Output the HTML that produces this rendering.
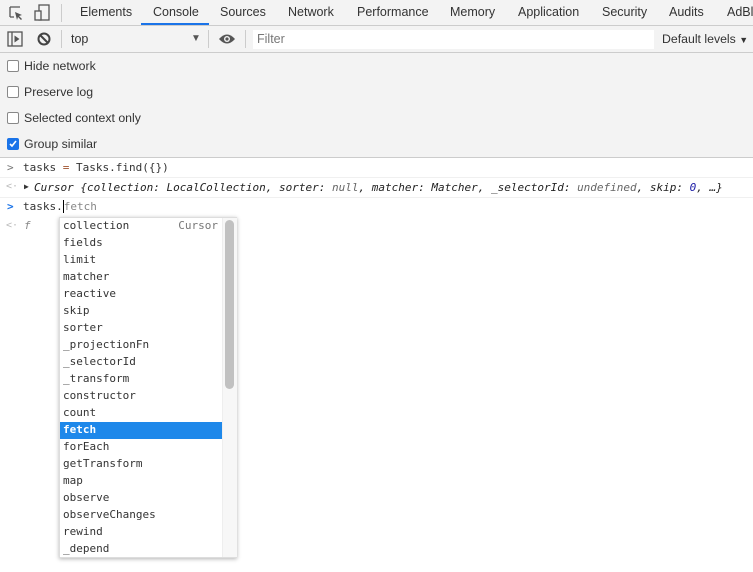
<!DOCTYPE html>
<html><head><style>
*{margin:0;padding:0;box-sizing:border-box}
body{width:753px;height:572px;background:#fff;font-family:"Liberation Sans",Arial,sans-serif;font-size:12px;color:#333;position:relative;overflow:hidden}
.abs{position:absolute}
.tabs{left:0;top:0;width:753px;height:26px;background:#f3f3f3;border-bottom:1px solid #ccc}
.tab{position:absolute;top:5px;font-size:12.5px;color:#333}
.tb{left:0;top:26px;width:753px;height:27px;background:#f3f3f3;border-bottom:1px solid #ccc}
.set{left:0;top:53px;width:753px;height:105px;background:#f3f3f3;border-bottom:1px solid #ccc}
.cb{position:absolute;left:7px;width:12px;height:12px;border:1px solid #888;border-radius:2px;background:#fff}
.cl{position:absolute;left:24px;font-size:12.3px;color:#333}
.mono{font-family:"DejaVu Sans Mono","Liberation Mono",monospace;font-size:11px}
.pop{left:59px;top:217px;width:178px;height:341px;background:#fff;border:1px solid #ddd;box-shadow:0 1px 4px rgba(0,0,0,.3)}
.it{position:absolute;left:0;width:162px;height:17px;padding-left:3px;line-height:16px;color:#333}
</style></head><body>
<div class="abs tabs">
<svg class="abs" style="left:8px;top:5px" width="16" height="16"><path d="M2 2h10M2 2v10M2 12h4" stroke="#555" fill="none" stroke-width="1.3"/><path d="M7 7l7 3-3 1 3 3-1 1-3-3-1 3z" fill="#555"/></svg>
<svg class="abs" style="left:33px;top:4px" width="18" height="18"><rect x="6" y="1" width="10" height="15" fill="none" stroke="#555" stroke-width="1.3"/><rect x="2" y="7" width="6" height="9" fill="#f3f3f3" stroke="#555" stroke-width="1.3"/></svg>
<div class="abs" style="left:61px;top:4px;width:1px;height:18px;background:#ccc"></div>
<span class="tab" style="left:80px">Elements</span>
<span class="tab" style="left:153px">Console</span>
<div class="abs" style="left:141px;top:23px;width:68px;height:2px;background:#1a73e8"></div>
<span class="tab" style="left:220px">Sources</span>
<span class="tab" style="left:288px">Network</span>
<span class="tab" style="left:357px">Performance</span>
<span class="tab" style="left:450px">Memory</span>
<span class="tab" style="left:518px">Application</span>
<span class="tab" style="left:602px">Security</span>
<span class="tab" style="left:669px">Audits</span>
<span class="tab" style="left:727px">AdBl</span>
</div>
<div class="abs tb">
<svg class="abs" style="left:7px;top:5px" width="16" height="16"><rect x="1" y="1" width="14" height="14" fill="none" stroke="#555" stroke-width="1.3"/><path d="M5 1v14" stroke="#555" stroke-width="1.3"/><path d="M7.5 4.5l5 3.5-5 3.5z" fill="#555"/></svg>
<svg class="abs" style="left:36px;top:5px" width="16" height="16"><circle cx="8" cy="8" r="5.5" fill="none" stroke="#444" stroke-width="2"/><path d="M4 4l8 8" stroke="#444" stroke-width="2"/></svg>
<div class="abs" style="left:61px;top:4px;width:1px;height:18px;background:#ccc"></div>
<span class="abs" style="left:71px;top:6px;font-size:12.5px">top</span>
<span class="abs" style="left:191px;top:7px;font-size:10px;color:#555">▼</span>
<div class="abs" style="left:208px;top:4px;width:1px;height:18px;background:#ccc"></div>
<svg class="abs" style="left:218px;top:6px" width="18" height="14"><path d="M1 7Q9 -2 17 7Q9 16 1 7z" fill="#555"/><circle cx="9" cy="7" r="3" fill="#f3f3f3"/><circle cx="9" cy="7" r="1.6" fill="#555"/></svg>
<div class="abs" style="left:245px;top:4px;width:1px;height:18px;background:#ccc"></div>
<div class="abs" style="left:253px;top:4px;width:401px;height:19px;background:#fff"></div>
<span class="abs" style="left:257px;top:6px;font-size:12.5px;color:#777">Filter</span>
<span class="abs" style="left:662px;top:6px;font-size:12.3px">Default levels <span style="font-size:9px">▼</span></span>
</div>
<div class="abs set">
<div class="cb" style="top:7px"></div><span class="cl" style="top:6px">Hide network</span>
<div class="cb" style="top:33px"></div><span class="cl" style="top:32px">Preserve log</span>
<div class="cb" style="top:59px"></div><span class="cl" style="top:58px">Selected context only</span>
<div class="cb" style="top:85px;background:#1a73e8;border-color:#1a73e8"><svg width="10" height="10" style="position:absolute;left:0;top:0"><path d="M2 5l2 2 4-5" stroke="#fff" stroke-width="1.6" fill="none"/></svg></div><span class="cl" style="top:84px">Group similar</span>
</div>
<div class="abs mono" style="left:0;top:159px;width:753px;height:19px;border-bottom:1px solid #f0f0f0"><span class="abs" style="left:7px;top:2px;color:#777">&gt;</span><span class="abs" style="left:23px;top:2px">tasks <span style="color:#a0522d">=</span> Tasks.find({})</span></div>
<div class="abs mono" style="left:0;top:178px;width:753px;height:20px;border-bottom:1px solid #f0f0f0"><span class="abs" style="left:6px;top:3px;color:#bbb;font-size:10px">&lt;·</span><span class="abs" style="left:24px;top:4px;font-size:8px">▶</span><span class="abs" style="left:34px;top:3px;font-style:italic;color:#222">Cursor {collection: LocalCollection, sorter: <span style="color:#666">null</span>, matcher: Matcher, _selectorId: <span style="color:#666">undefined</span>, skip: <span style="color:#1a1aa6">0</span>, …}</span></div>
<div class="abs mono" style="left:0;top:199px;width:753px;height:18px"><span class="abs" style="left:7px;top:1px;color:#1a73e8;font-weight:bold">&gt;</span><span class="abs" style="left:23px;top:1px">tasks.<span style="border-left:1px solid #000;color:#888">fetch</span></span></div>
<span class="abs mono" style="left:6px;top:220px;color:#bbb;font-size:10px">&lt;·</span><span class="abs mono" style="left:24px;top:219px;color:#888;font-style:italic">f</span>
<div class="abs pop mono">
<div class="abs" style="left:162px;top:0;width:15px;height:339px;background:#f7f7f7;border-left:1px solid #eee"></div>
<div class="abs" style="left:165px;top:2px;width:9px;height:169px;background:#c1c1c1;border-radius:5px"></div>
<div class="it" style="top:0">collection<span style="position:absolute;right:4px;color:#777">Cursor</span></div>
<div class="it" style="top:17px">fields</div>
<div class="it" style="top:34px">limit</div>
<div class="it" style="top:51px">matcher</div>
<div class="it" style="top:68px">reactive</div>
<div class="it" style="top:85px">skip</div>
<div class="it" style="top:102px">sorter</div>
<div class="it" style="top:119px">_projectionFn</div>
<div class="it" style="top:136px">_selectorId</div>
<div class="it" style="top:153px">_transform</div>
<div class="it" style="top:170px">constructor</div>
<div class="it" style="top:187px">count</div>
<div class="it" style="top:204px;background:#1e88ea;color:#fff;font-weight:bold">fetch</div>
<div class="it" style="top:221px">forEach</div>
<div class="it" style="top:238px">getTransform</div>
<div class="it" style="top:255px">map</div>
<div class="it" style="top:272px">observe</div>
<div class="it" style="top:289px">observeChanges</div>
<div class="it" style="top:306px">rewind</div>
<div class="it" style="top:323px">_depend</div>
</div>
</body></html>
